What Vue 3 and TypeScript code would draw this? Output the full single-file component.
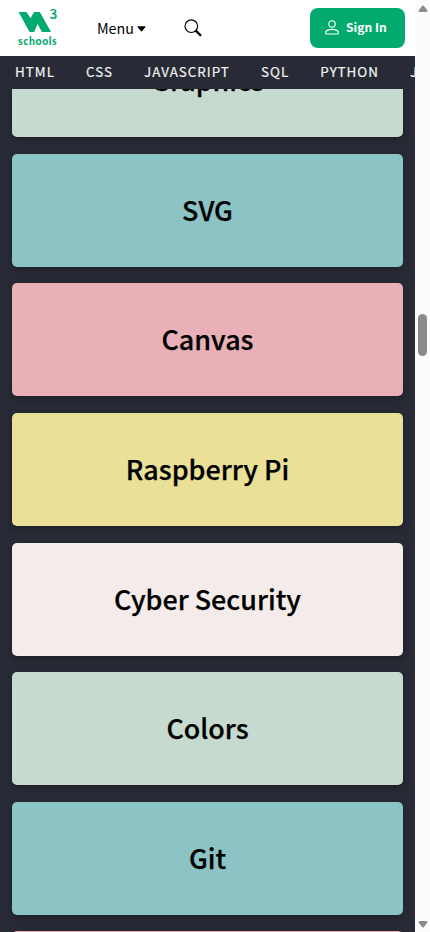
<script setup lang="ts">
interface Topic {
  title: string
  tone: string
}

const links: string[] = ['HTML', 'CSS', 'JAVASCRIPT', 'SQL', 'PYTHON', 'JAVA']

const topics: Topic[] = [
  { title: 'Graphics', tone: 'mint' },
  { title: 'SVG', tone: 'teal' },
  { title: 'Canvas', tone: 'pink' },
  { title: 'Raspberry Pi', tone: 'yellow' },
  { title: 'Cyber Security', tone: 'pale' },
  { title: 'Colors', tone: 'mint' },
  { title: 'Git', tone: 'teal' },
]
</script>

<template>
  <div class="window">
    <div class="page">
      <header class="topbar">
        <a class="logo" aria-label="W3Schools">
          <span class="mark">
            <svg width="34" height="21" viewBox="0 0 34 21">
              <path d="M.6 0H8.4L12.6 6.2L16 0H21.8L33 20H24L19.6 12L16.2 20H11.6Z" fill="#04aa6d" />
            </svg>
            <span class="three">3</span>
          </span>
          <span class="word">schools</span>
        </a>
        <button class="menu">
          Menu
          <svg width="9" height="6" viewBox="0 0 10 6" preserveAspectRatio="none"><path d="M1 .3H9Q9.8.6 9.2 1.2L5.5 5.2Q5 5.7 4.5 5.2L.8 1.2Q.2.6 1 .3Z" /></svg>
        </button>
        <button class="search" aria-label="Search">
          <svg width="18" height="18" viewBox="0 0 18 18" fill="none" stroke="#000">
            <circle cx="7.3" cy="7.2" r="6.3" stroke-width="1.2" />
            <path d="M12 11.9L16.3 16.1" stroke-width="2.3" stroke-linecap="round" />
          </svg>
        </button>
        <button class="signin">
          <svg width="14" height="15" viewBox="0 0 14 15" fill="none" stroke="#fff" stroke-width="1.1">
            <circle cx="7" cy="4" r="3.2" />
            <path d="M1.6 14H12.4Q13.4 14 13.4 13C13.2 10.8 11 9.4 7 9.4S.8 10.8.6 13Q.6 14 1.6 14Z" />
          </svg>
          <span>Sign In</span>
        </button>
      </header>
      <nav class="subnav">
        <a v-for="link in links" :key="link">{{ link }}</a>
      </nav>
      <main class="topics">
        <section v-for="topic in topics" :key="topic.title" class="card" :class="topic.tone">
          <h2>{{ topic.title }}</h2>
        </section>
        <section class="card pink"></section>
      </main>
    </div>
    <aside class="scrollbar">
      <svg width="10" height="8" viewBox="0 0 10 8"><path d="M4.2.8Q5 0 5.8.8L9.2 5.3Q9.8 7 8.5 7H1.5Q.2 7 .8 5.3Z" fill="#8b8b8b" /></svg>
      <div class="thumb"></div>
      <svg class="down" width="10" height="8" viewBox="0 0 10 8"><path d="M4.2 7.2Q5 8 5.8 7.2L9.2 2.7Q9.8 1 8.5 1H1.5Q.2 1 .8 2.7Z" fill="#8b8b8b" /></svg>
    </aside>
  </div>
</template>

<style>
body {
  overflow: hidden;
}
</style>

<style scoped>
.window {
  display: flex;
  width: 430px;
  height: 932px;
  overflow: hidden;
  font-family: "Noto Sans CJK SC", "Noto Sans", sans-serif;
}
.page {
  display: flex;
  flex-direction: column;
  width: 415px;
  height: 932px;
  overflow: hidden;
  background: #282a35;
}
button {
  padding: 0;
  border: 0;
  background: none;
  font-family: inherit;
  color: #000;
}
svg {
  display: block;
  flex: none;
}
.topbar {
  position: relative;
  z-index: 2;
  display: flex;
  flex: none;
  height: 56px;
  background: #fff;
}
.logo {
  display: flex;
  flex-direction: column;
  width: 42px;
  margin-left: 18px;
  padding-top: 7px;
  color: #04aa6d;
}
.mark {
  display: flex;
  height: 28px;
}
.mark svg {
  margin-top: 5px;
}
.three {
  margin-left: -2.5px;
  font-size: 13.6px;
  font-weight: 500;
  line-height: 12px;
  -webkit-text-stroke: 0.2px #04aa6d;
}
.word {
  font-family: Lato, sans-serif;
  font-size: 10.5px;
  font-weight: 900;
  line-height: 12px;
  letter-spacing: 0.6px;
}
.menu {
  display: flex;
  align-items: center;
  gap: 3.5px;
  height: 55px;
  margin-left: 37px;
  font-size: 14.3px;
}
.menu svg {
  margin-top: 2px;
}
.search {
  height: 55px;
  margin-left: 38px;
}
.signin {
  display: flex;
  align-items: center;
  gap: 7px;
  width: 95px;
  height: 40px;
  margin: 8px 10px 0 auto;
  padding: 0 0 2px 15px;
  border-radius: 8px;
  background: #04aa6d;
  color: #fff;
  font-size: 12.1px;
  font-weight: 700;
  line-height: 20px;
}
.subnav {
  position: relative;
  z-index: 1;
  display: flex;
  flex: none;
  gap: 31.1px;
  height: 33px;
  padding-left: 15px;
  background: #282a35;
  color: #f1f1f1;
  font-size: 13.4px;
  line-height: 30px;
  letter-spacing: 1px;
  white-space: nowrap;
  -webkit-text-stroke: 0.2px #f1f1f1;
}
.topics {
  display: flex;
  flex-direction: column;
  gap: 16.6px;
  margin-top: -64.8px;
  padding: 0 12px;
}
.card {
  display: flex;
  flex: none;
  align-items: center;
  justify-content: center;
  height: 113px;
  border-radius: 5px;
  box-shadow: 0 2px 5px rgba(0, 0, 0, 0.16), 0 2px 10px rgba(0, 0, 0, 0.12);
}
.card h2 {
  margin: 0;
  padding-bottom: 0.8px;
  font-size: 26.9px;
  font-weight: 500;
  line-height: 40px;
  color: #000;
  -webkit-text-stroke: 0.25px #000;
}
.mint { background: #c7dad0; }
.teal { background: #8cc3c4; }
.pink { background: #eab0b8; }
.yellow { background: #eae098; }
.pale { background: #f3ecea; }
.scrollbar {
  display: flex;
  flex-direction: column;
  align-items: center;
  width: 15px;
  height: 932px;
  padding-top: 5px;
  box-sizing: border-box;
  background: #fcfcfc;
}
.thumb {
  width: 9px;
  height: 42px;
  margin-top: 301px;
  border-radius: 5px;
  background: #8b8b8b;
}
.down {
  margin-top: auto;
  margin-bottom: 4px;
}
</style>
